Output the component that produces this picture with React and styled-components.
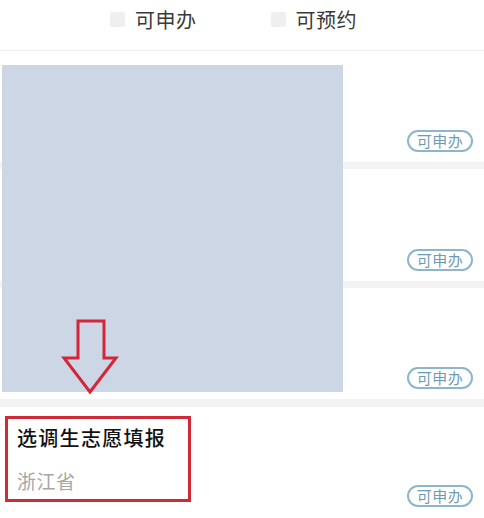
import React from "react";
import styled, { createGlobalStyle } from "styled-components";

const Global = createGlobalStyle`
  html, body { margin: 0; padding: 0; background: #fff; }
  body { font-family: "Noto Sans CJK SC", "Noto Sans", sans-serif; width: 484px; height: 518px; overflow: hidden; }
`;

const Page = styled.div`
  position: relative;
  width: 484px;
  height: 518px;
  background: #fff;
`;

const FilterBar = styled.div`
  display: flex;
  align-items: center;
  height: 51px;
  padding-left: 110px;
  gap: 74px;
  border-bottom: 1px solid #f0f0f0;
  box-sizing: border-box;
  padding-bottom: 12px;
`;

const Filter = styled.div`
  display: flex;
  align-items: center;
  gap: 10px;
  font-size: 20px;
  color: #3a3a3a;
  letter-spacing: 0.5px;
`;

const Check = styled.span`
  width: 15px;
  height: 15px;
  background: #efefef;
  border-radius: 2px;
`;

const Row = styled.div`
  position: relative;
  height: ${(p) => p.$h}px;
  box-sizing: border-box;
  display: flex;
  flex-direction: column;
  padding-top: ${(p) => p.$pt || 0}px;
`;

const Sep = styled.div`
  height: ${(p) => p.$h || 7}px;
  background: #f3f3f3;
`;

const Tag = styled.span`
  position: absolute;
  right: 11px;
  bottom: 10px;
  width: 66px;
  height: 22px;
  box-sizing: border-box;
  border: 2px solid #8db6ca;
  border-radius: 11px;
  color: #6e9bb4;
  font-size: 15px;
  line-height: 18px;
  text-align: center;
  letter-spacing: 0.5px;
`;

const Highlight = styled.div`
  margin-left: 5px;
  width: 186px;
  height: 86px;
  box-sizing: border-box;
  border: 3px solid #cf2a38;
  padding: 7px 0 0 9px;
  display: flex;
  flex-direction: column;
  gap: 19px;
`;

const Title = styled.div`
  font-size: 20px;
  font-weight: 500;
  color: #111;
  letter-spacing: 1.3px;
  line-height: 24px;
`;

const Sub = styled.div`
  font-size: 19px;
  color: #a6a6a6;
  letter-spacing: 0.5px;
  line-height: 24px;
`;

const Cover = styled.div`
  position: absolute;
  left: 2px;
  top: 65px;
  width: 341px;
  height: 327px;
  background: #cdd6e4;
`;

const Arrow = styled.svg`
  position: absolute;
  left: 61px;
  top: 318px;
`;

export default function App() {
  return (
    <Page>
      <Global />
      <FilterBar>
        <Filter>
          <Check />
          可申办
        </Filter>
        <Filter>
          <Check />
          可预约
        </Filter>
      </FilterBar>
      <Row $h={111}>
        <Tag>可申办</Tag>
      </Row>
      <Sep />
      <Row $h={112}>
        <Tag>可申办</Tag>
      </Row>
      <Sep />
      <Row $h={111}>
        <Tag>可申办</Tag>
      </Row>
      <Sep $h={8} />
      <Row $h={110} $pt={9}>
        <Highlight>
          <Title>选调生志愿填报</Title>
          <Sub>浙江省</Sub>
        </Highlight>
        <Tag>可申办</Tag>
      </Row>
      <Cover />
      <Arrow width="58" height="78" viewBox="0 0 58 78">
        <path
          d="M17 3 H43 V40 H55 L29 74 L3 40 H17 Z"
          fill="none"
          stroke="#d3263a"
          strokeWidth="3"
          strokeLinejoin="miter"
        />
      </Arrow>
    </Page>
  );
}
